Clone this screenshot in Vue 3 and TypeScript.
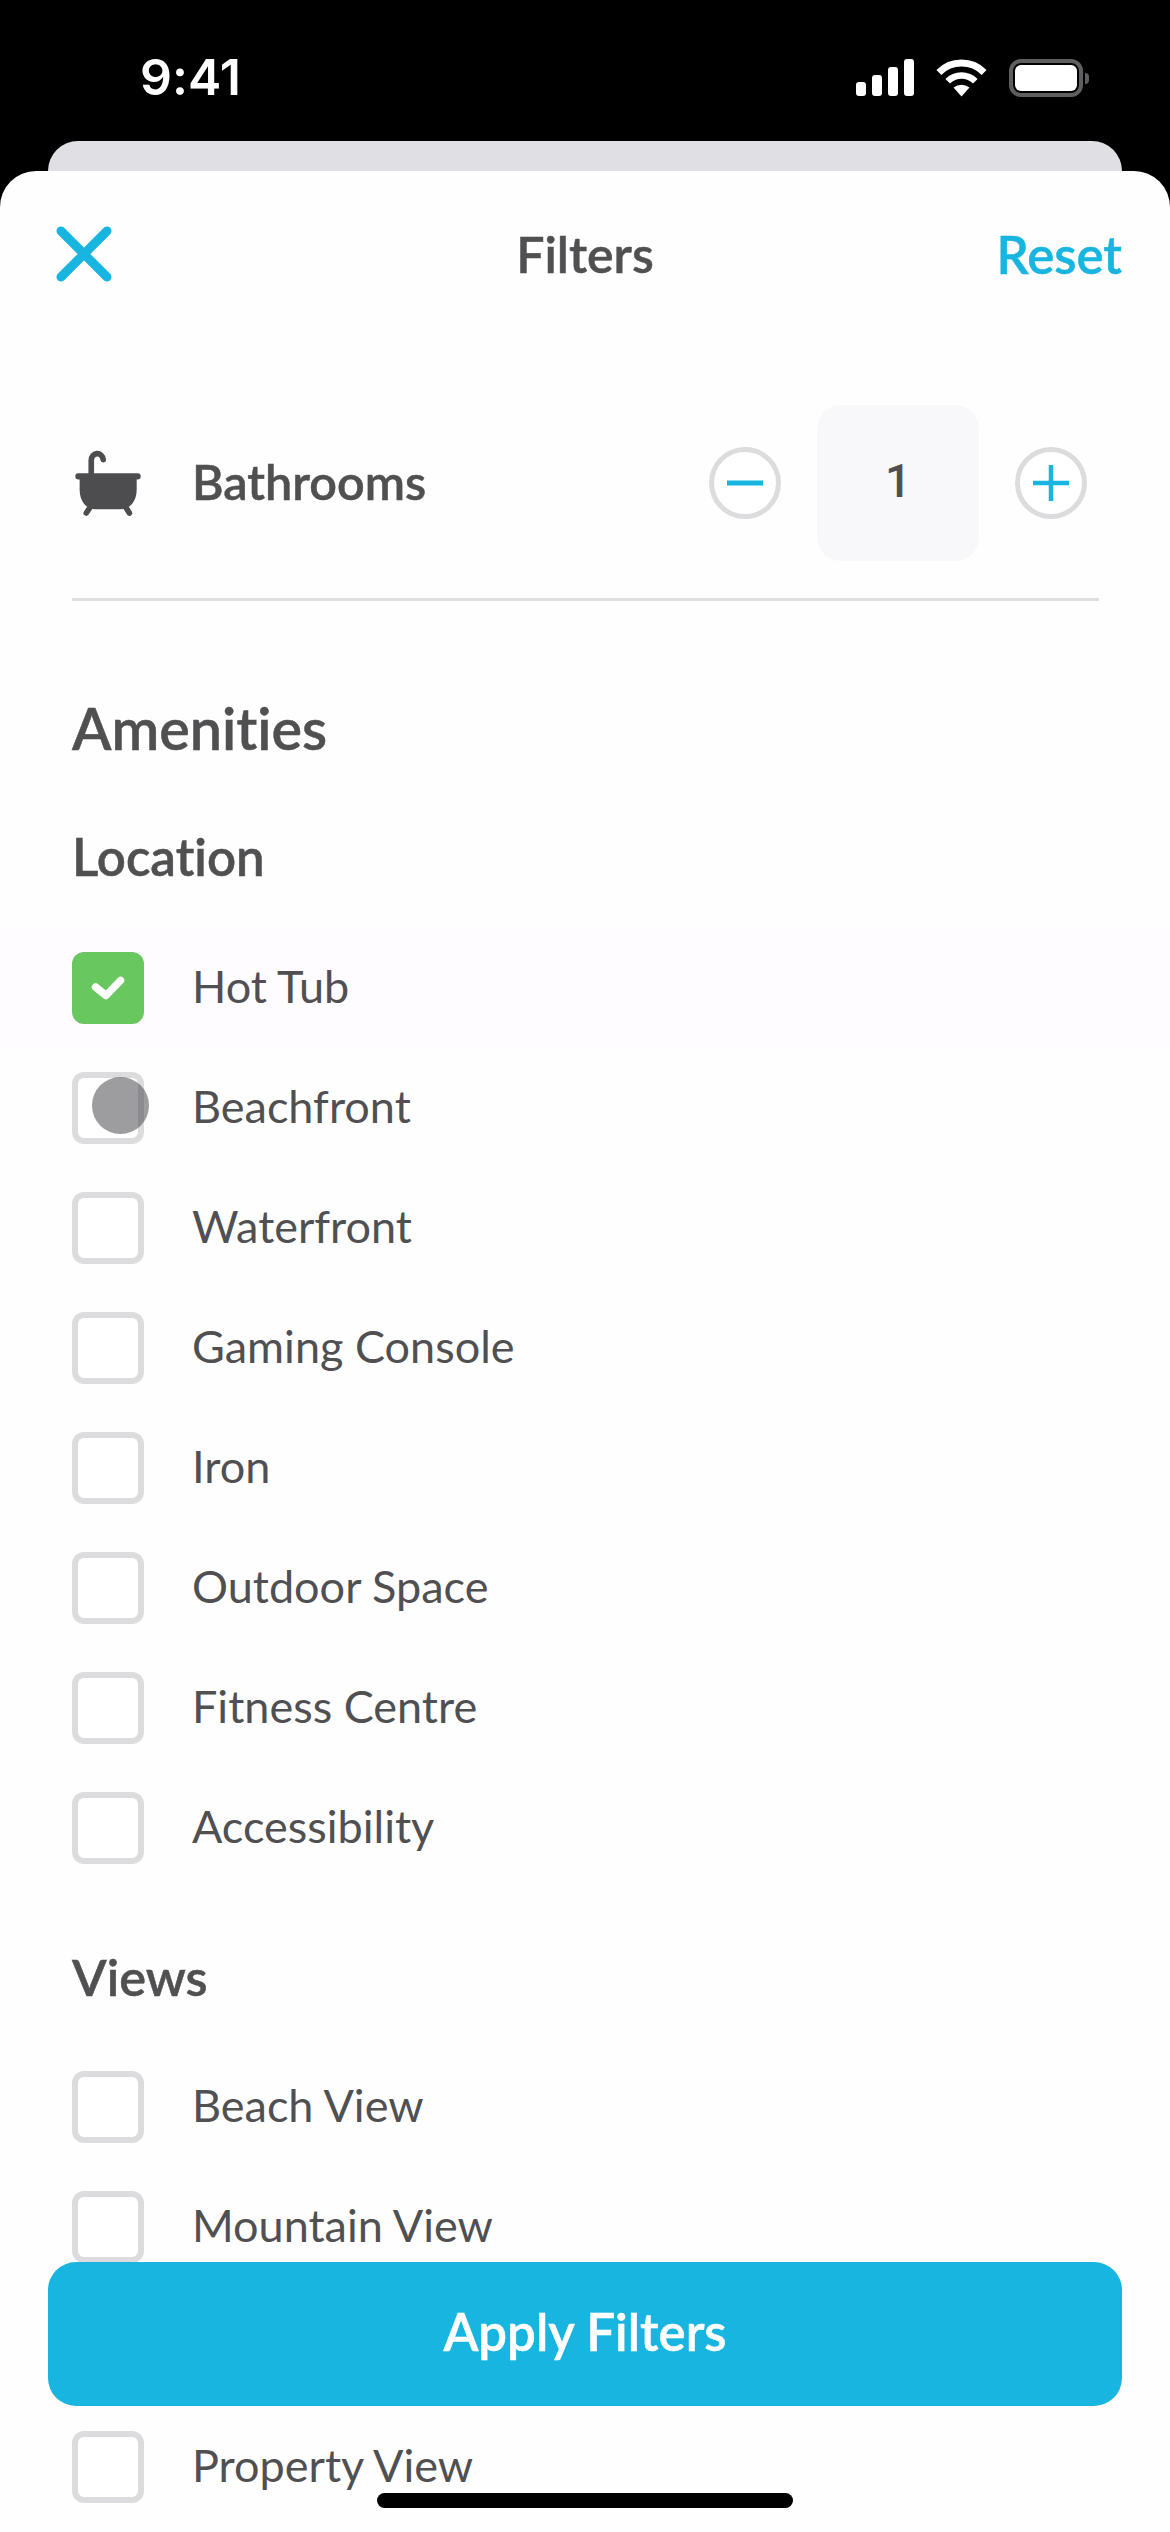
<script setup lang="ts">
interface Item { label: string; checked?: boolean; touch?: boolean; active?: boolean }
const locationItems: Item[] = [
  { label: 'Hot Tub', checked: true, active: true },
  { label: 'Beachfront', touch: true },
  { label: 'Waterfront' },
  { label: 'Gaming Console' },
  { label: 'Iron' },
  { label: 'Outdoor Space' },
  { label: 'Fitness Centre' },
  { label: 'Accessibility' },
]
const viewItems: Item[] = [
  { label: 'Beach View' },
  { label: 'Mountain View' },
  { label: '' },
  { label: 'Property View' },
]
</script>

<template>
  <div class="screen">
    <div class="status">
      <span class="time">9:41</span>
      <div class="status-icons">
        <svg class="signal" width="58" height="37" viewBox="0 0 58 37" fill="#fff">
          <rect x="0" y="23" width="10" height="14" rx="3" />
          <rect x="16" y="16" width="10" height="21" rx="3" />
          <rect x="32" y="8" width="10" height="29" rx="3" />
          <rect x="48" y="0" width="10" height="37" rx="3" />
        </svg>
        <svg class="wifi" width="51" height="38" viewBox="0 0 51 38" fill="none" stroke="#fff">
          <path d="M2.9 13.4A32 32 0 0 1 48.1 13.4" stroke-width="7" />
          <path d="M11.7 22.2A19.5 19.5 0 0 1 39.3 22.2" stroke-width="6.5" />
          <path d="M25.5 37.5L17.5 28.6Q25.5 23 33.5 28.6Z" fill="#fff" stroke="none" />
        </svg>
        <div class="battery"><div class="battery-fill"></div><div class="battery-nub"></div></div>
      </div>
    </div>
    <div class="peek"></div>
    <div class="sheet">
      <header class="head">
        <svg class="close" width="56" height="56" viewBox="0 0 56 56" fill="none" stroke="#17b5e0" stroke-width="9" stroke-linecap="round">
          <path d="M5 5L51 51M51 5L5 51" />
        </svg>
        <span class="title">Filters</span>
        <span class="reset">Reset</span>
      </header>

      <div class="stepper-row">
        <svg class="tub" width="67" height="68" viewBox="75 90 200 205">
          <path d="M123 170V125C123 100 155 95 159 122" fill="none" stroke="#4d4d4f" stroke-width="17" stroke-linecap="round" />
          <rect x="75" y="163" width="197" height="19" rx="9" fill="#4d4d4f" />
          <path d="M88 178H260V212C260 248 240 270 212 272H135C107 270 88 248 88 212Z" fill="#4d4d4f" />
          <path d="M122 262L108 283M225 262L238 283" stroke="#4d4d4f" stroke-width="17" stroke-linecap="round" />
        </svg>
        <span class="stepper-label">Bathrooms</span>
        <div class="stepper">
          <button class="round">
            <svg width="36" height="36" viewBox="0 0 36 36" stroke="#17b5e0" stroke-width="5"><path d="M0 18H36" /></svg>
          </button>
          <div class="value">1</div>
          <button class="round">
            <svg width="36" height="36" viewBox="0 0 36 36" stroke="#17b5e0" stroke-width="4.5"><path d="M0 18H36M18 0V36" /></svg>
          </button>
        </div>
      </div>
      <div class="divider"></div>

      <h2 class="h-amenities">Amenities</h2>
      <h3 class="h-location">Location</h3>
      <ul class="list list-location">
        <li v-for="item in locationItems" :key="item.label" class="row" :class="{ active: item.active }">
          <span class="box" :class="{ on: item.checked }">
            <svg v-if="item.checked" width="72" height="72" viewBox="0 0 72 72" fill="none" stroke="#fff" stroke-width="7.5" stroke-linecap="round" stroke-linejoin="round">
              <path d="M23.5 35L34 43.5L48.5 28.5" />
            </svg>
            <span v-if="item.touch" class="touch"></span>
          </span>
          <span class="label">{{ item.label }}</span>
        </li>
      </ul>

      <h3 class="h-views">Views</h3>
      <ul class="list list-views">
        <li v-for="(item, i) in viewItems" :key="i" class="row">
          <span class="box"></span>
          <span class="label">{{ item.label }}</span>
        </li>
      </ul>

      <button class="apply">Apply Filters</button>
      <div class="home"></div>
    </div>
  </div>
</template>

<style>
html, body { margin: 0; background: #000; }
</style>

<style scoped>
.screen {
  width: 1170px;
  height: 2532px;
  background: #000;
  display: flex;
  flex-direction: column;
  overflow: hidden;
  font-family: Lato, "Open Sans", sans-serif;
  font-variant-ligatures: none;
  color: #505052;
}
.status {
  height: 141px;
  flex: none;
  display: flex;
  align-items: flex-start;
  justify-content: space-between;
  box-sizing: border-box;
  padding: 59px 87px 0 140px;
}
.time {
  font-family: Inter, sans-serif;
  font-weight: 600;
  font-size: 50px;
  line-height: 37px;
  color: #fff;
}
.status-icons { display: flex; align-items: flex-start; gap: 22px; }
.signal, .wifi { display: block; }
.battery {
  position: relative;
  width: 74px;
  height: 38px;
  box-sizing: border-box;
  border: 4px solid #5e5e60;
  border-radius: 12px;
  padding: 2px;
}
.battery-fill { width: 100%; height: 100%; background: #fff; border-radius: 6px; }
.battery-nub {
  position: absolute;
  right: -10px;
  top: 10px;
  width: 4px;
  height: 11px;
  background: #5e5e60;
  border-radius: 0 4px 4px 0;
}
.peek {
  height: 30px;
  flex: none;
  margin: 0 48px;
  background: #e0dfe3;
  border-radius: 30px 30px 0 0;
}
.sheet {
  position: relative;
  flex: 1;
  background: #fefefe;
  border-radius: 36px 36px 0 0;
  overflow: hidden;
}
.head {
  height: 172px;
  position: relative;
  display: flex;
  align-items: center;
  justify-content: space-between;
  padding: 0 48px 0 56px;
}
.close { display: block; margin-bottom: 6px; }
.title {
  position: absolute;
  left: 0;
  right: 0;
  text-align: center;
  font-size: 50px;
  font-weight: 600;
  -webkit-text-stroke: 0.5px currentColor;
  padding-bottom: 6px;
  pointer-events: none;
}
.reset {
  font-size: 51px;
  font-weight: 600;
  -webkit-text-stroke: 0.5px currentColor;
  color: #17b5e0;
  padding-bottom: 6px;
}
.stepper-row {
  height: 156px;
  margin-top: 62px;
  padding: 0 83px 0 75px;
  display: flex;
  align-items: center;
}
.tub { display: block; }
.stepper-label {
  margin-left: 50px;
  font-size: 48.5px;
  font-weight: 600;
  -webkit-text-stroke: 0.5px currentColor;
  padding-bottom: 4px;
}
.stepper {
  margin-left: auto;
  display: flex;
  align-items: center;
}
.round {
  width: 72px;
  height: 72px;
  box-sizing: border-box;
  border: 5px solid #dcdcde;
  border-radius: 50%;
  background: #fff;
  padding: 0;
  display: flex;
  align-items: center;
  justify-content: center;
}
.value {
  width: 162px;
  height: 156px;
  margin: 0 36px;
  background: #f8f8fa;
  border-radius: 24px;
  display: flex;
  align-items: center;
  justify-content: center;
  font-family: Roboto, sans-serif;
  font-size: 46px;
  font-weight: 500;
  padding-bottom: 4px;
  box-sizing: border-box;
}
.divider { height: 3px; margin: 37px 71px 0 72px; background: #dfdfe1; }
h2, h3 { margin: 0; padding: 0 72px; font-weight: 600; -webkit-text-stroke: 0.5px currentColor; }
.h-amenities { margin-top: 97px; font-size: 57.5px; line-height: 60px; }
.h-location { margin-top: 71px; font-size: 51px; line-height: 56px; }
.h-views { margin-top: 61px; font-size: 50.5px; line-height: 56px; }
.list { list-style: none; margin: 0; padding: 0; }
.list-location { margin-top: 43px; }
.list-views { margin-top: 42px; }
.row {
  height: 120px;
  padding-left: 72px;
  display: flex;
  align-items: center;
  gap: 48px;
}
.row.active { background: #fefcff; }
.box {
  position: relative;
  width: 72px;
  height: 72px;
  flex: none;
  box-sizing: border-box;
  border: 6px solid #dcdcde;
  border-radius: 12px;
  background: #fff;
}
.box.on { border: none; background: #69c75f; }
.box svg { display: block; }
.touch {
  position: absolute;
  left: 14px;
  top: -1px;
  width: 57px;
  height: 57px;
  border-radius: 50%;
  background: rgba(60, 58, 64, 0.5);
}
.label { font-size: 45px; font-weight: 400; padding-bottom: 4px; }
.apply {
  position: absolute;
  left: 48px;
  right: 48px;
  top: 2091px;
  height: 144px;
  border: none;
  border-radius: 28px;
  background: #17b5e0;
  color: #fff;
  font-family: inherit;
  font-size: 51px;
  font-weight: 600;
  -webkit-text-stroke: 0.5px currentColor;
  padding: 0 0 6px;
}
.home {
  position: absolute;
  left: 377px;
  top: 2322px;
  width: 416px;
  height: 15px;
  background: #000;
  border-radius: 8px;
}
</style>
